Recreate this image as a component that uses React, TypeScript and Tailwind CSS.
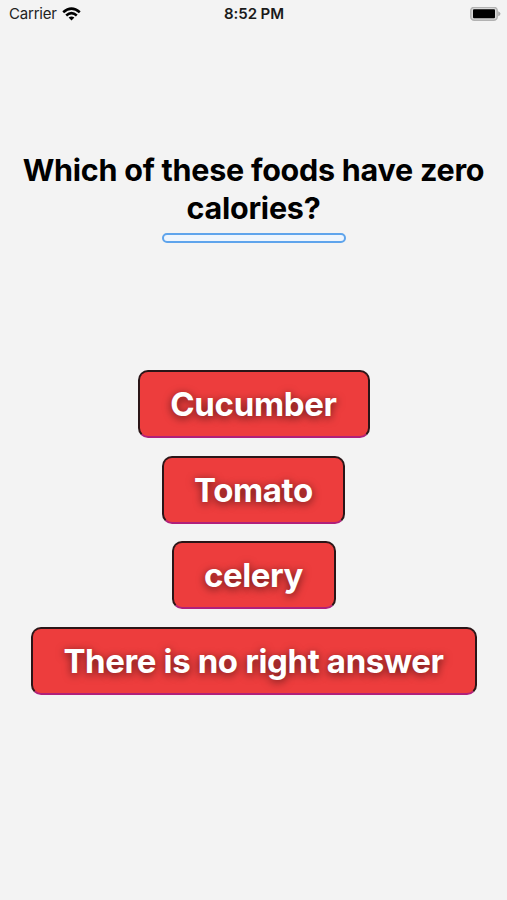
const answers = [
  { label: 'Cucumber', box: 'w-[232px]', tracking: 'tracking-[-0.3px]' },
  { label: 'Tomato', box: 'w-[183px]', tracking: 'tracking-[-0.35px]' },
  { label: 'celery', box: 'w-[164px]', tracking: 'tracking-[-0.45px]' },
  { label: 'There is no right answer', box: 'w-[446px]', tracking: 'tracking-[-0.37px]' }
]

function StatusBar() {
  return (
    <div className="grid h-7 grid-cols-3 items-center pr-[6px] pl-[9px] text-[15px]">
      <div className="flex items-center gap-[5px] text-[#222]">
        <span className="tracking-[-0.2px]">Carrier</span>
        <svg width="19" height="14" viewBox="0 0 19 14" fill="none" stroke="black" strokeWidth="2.6">
          <path d="M1.2 5.2Q9.5-2 17.8 5.2" />
          <path d="M4.2 8.5Q9.5 3.9 14.8 8.5" />
          <path d="M9.5 13.4L6.6 10.6Q9.5 8.2 12.4 10.6Z" fill="black" stroke="none" />
        </svg>
      </div>
      <span className="-ml-[2px] text-center font-semibold tracking-[-0.1px] text-[#1a1a1a]">8:52 PM</span>
      <svg className="justify-self-end" width="31" height="15" viewBox="0 0 31 15">
        <rect x="0.8" y="0.3" width="26.4" height="13" rx="3.5" fill="#d8d8d8" stroke="#b2b2b2" strokeWidth="1.5" />
        <rect x="3" y="2.3" width="22" height="9" rx="1" fill="black" />
        <path d="M28.2 4.3Q30.5 5.3 30.5 6.8T28.2 9.3Z" fill="#a8a8a8" />
      </svg>
    </div>
  )
}

export default function App() {
  return (
    <div className="flex h-[900px] w-[507px] flex-col bg-[#f3f3f3] font-['Inter',sans-serif] text-black">
      <StatusBar />
      <h1 className="mt-[123px] text-center text-[30.5px] leading-[38px] font-bold tracking-[-0.25px] whitespace-nowrap">
        Which of these foods have zero
        <br />
        calories?
      </h1>
      <div className="mx-auto mt-[6px] h-[10px] w-[184px] rounded-[5px] border-2 border-[#5ea4ec] bg-[#eef5fd]" />

      <div className="mt-[127px] flex flex-col items-center gap-[17.5px]">
        {answers.map(answer => (
          <button
            key={answer.label}
            className={`${answer.box} ${answer.tracking} flex h-[68px] items-center justify-center rounded-[10px] border-2 border-[#2a1517] border-b-[#b0207a] bg-[#ed3d3d] pt-[2px] text-[33px] font-bold whitespace-nowrap text-white [text-shadow:0_2px_8px_rgba(0,0,0,0.6)]`}
          >
            {answer.label}
          </button>
        ))}
      </div>
    </div>
  )
}
